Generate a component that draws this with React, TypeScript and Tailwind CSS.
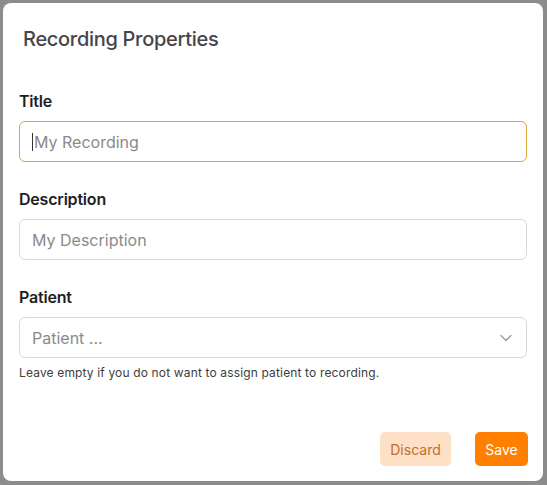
import { ChevronDown } from "lucide-react";

export default function App() {
  return (
    <div className="h-[485px] w-[547px] bg-[#8c8c8c] p-[3px] pr-[4px] pb-[4px] font-['Inter',sans-serif]">
      <div className="flex h-full flex-col rounded-[8px] bg-white">
        <h1 className="px-5 pt-[22px] text-[20px] leading-[28px] font-medium tracking-[-0.3px] text-[#45454a]">
          Recording Properties
        </h1>

        <div className="mt-[36px] flex flex-col px-4">
          <label className="text-[16px] leading-[24px] font-semibold tracking-[-0.2px] text-[#1e1e1e]">Title</label>
          <div className="mt-2 flex h-[41px] items-center rounded-[6px] border border-[#dfa43c] px-3">
            <span className="mr-[1px] h-[18px] w-px bg-[#333]" />
            <span className="text-[16px] text-[#8a8a8a]">My Recording</span>
          </div>

          <label className="mt-[25px] text-[16px] leading-[24px] font-semibold tracking-[-0.2px] text-[#1e1e1e]">
            Description
          </label>
          <div className="mt-2 flex h-[41px] items-center rounded-[6px] border border-[#d9d9d9] px-3">
            <span className="text-[16px] text-[#8a8a8a]">My Description</span>
          </div>

          <label className="mt-[25px] text-[16px] leading-[24px] font-semibold tracking-[-0.2px] text-[#1e1e1e]">Patient</label>
          <div className="mt-2 flex h-[41px] items-center justify-between rounded-[6px] border border-[#d9d9d9] pr-[10px] pl-3">
            <span className="text-[16px] text-[#8a8a8a]">Patient ...</span>
            <ChevronDown className="h-5 w-5 text-[#9a9a9a]" strokeWidth={1.5} />
          </div>
          <p className="mt-[7px] text-[12px] leading-[16px] tracking-[0.15px] text-[#3d3d3d]">
            Leave empty if you do not want to assign patient to recording.
          </p>
        </div>

        <div className="mt-auto flex justify-end gap-6 pr-[15px] pb-[15px]">
          <button className="h-[34px] w-[71px] rounded-[5px] bg-[#fde0c5] text-[14px] text-[#c26f2c]">Discard</button>
          <button className="h-[34px] w-[53px] rounded-[5px] bg-[#ff8000] text-[14px] text-white">Save</button>
        </div>
      </div>
    </div>
  );
}
